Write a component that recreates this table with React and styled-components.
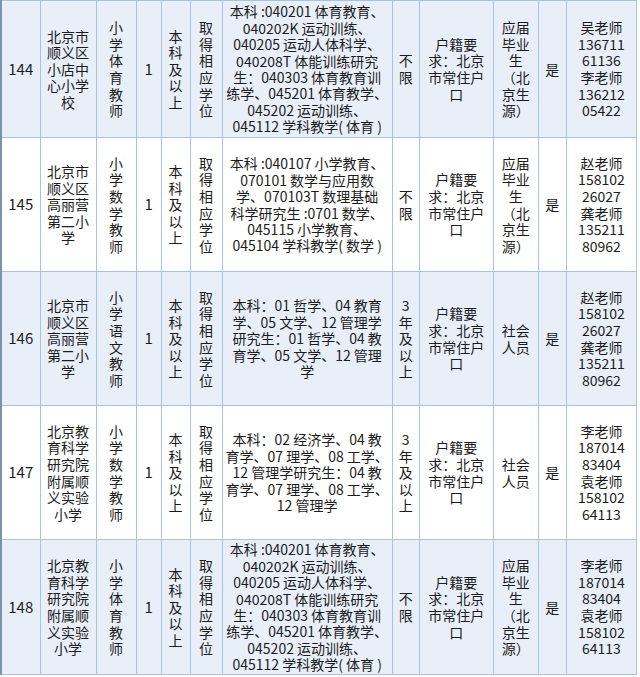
import React from "react";
import styled, { createGlobalStyle } from "styled-components";

const GlobalStyle = createGlobalStyle`
    html, body {
        margin: 0;
        padding: 0;
        background: #ffffff;
    }
`;

const COLUMN_WIDTHS = [39, 56, 40, 25, 29, 32, 170, 27, 74, 45, 28, 70];

const PE_MAJORS = [
    "本科 :040201 体育教育、",
    "040202K 运动训练、",
    "040205 运动人体科学、",
    "040208T 体能训练研究",
    "生：040303 体育教育训",
    "练学、045201 体育教学、",
    "045202 运动训练、",
    "045112 学科教学( 体育 )"
];

const ROWS = [
    {
        id: "144",
        school: ["北京市", "顺义区", "小店中", "心小学", "校"],
        post: "小学体育教师",
        count: "1",
        education: "本科及以上",
        degree: "取得相应学位",
        majors: PE_MAJORS,
        experience: "不限",
        hukou: ["户籍要", "求：北京", "市常住户", "口"],
        source: ["应届", "毕业", "生", "（北", "京生", "源）"],
        flag: "是",
        contact: ["吴老师", "136711", "61136", "李老师", "136212", "05422"]
    },
    {
        id: "145",
        school: ["北京市", "顺义区", "高丽营", "第二小", "学"],
        post: "小学数学教师",
        count: "1",
        education: "本科及以上",
        degree: "取得相应学位",
        majors: [
            "本科 :040107 小学教育、",
            "070101 数学与应用数",
            "学、070103T 数理基础",
            "科学研究生 :0701 数学、",
            "045115 小学教育、",
            "045104 学科教学( 数学 )"
        ],
        experience: "不限",
        hukou: ["户籍要", "求：北京", "市常住户", "口"],
        source: ["应届", "毕业", "生", "（北", "京生", "源）"],
        flag: "是",
        contact: ["赵老师", "158102", "26027", "龚老师", "135211", "80962"]
    },
    {
        id: "146",
        school: ["北京市", "顺义区", "高丽营", "第二小", "学"],
        post: "小学语文教师",
        count: "1",
        education: "本科及以上",
        degree: "取得相应学位",
        majors: [
            "本科：01 哲学、04 教育",
            "学、05 文学、12 管理学",
            "研究生：01 哲学、04 教",
            "育学、05 文学、12 管理",
            "学"
        ],
        experience: "3年及以上",
        hukou: ["户籍要", "求：北京", "市常住户", "口"],
        source: ["社会", "人员"],
        flag: "是",
        contact: ["赵老师", "158102", "26027", "龚老师", "135211", "80962"]
    },
    {
        id: "147",
        school: ["北京教", "育科学", "研究院", "附属顺", "义实验", "小学"],
        post: "小学数学教师",
        count: "1",
        education: "本科及以上",
        degree: "取得相应学位",
        majors: [
            "本科：02 经济学、04 教",
            "育学、07 理学、08 工学、",
            "12 管理学研究生：04 教",
            "育学、07 理学、08 工学、",
            "12 管理学"
        ],
        experience: "3年及以上",
        hukou: ["户籍要", "求：北京", "市常住户", "口"],
        source: ["社会", "人员"],
        flag: "是",
        contact: ["李老师", "187014", "83404", "袁老师", "158102", "64113"]
    },
    {
        id: "148",
        school: ["北京教", "育科学", "研究院", "附属顺", "义实验", "小学"],
        post: "小学体育教师",
        count: "1",
        education: "本科及以上",
        degree: "取得相应学位",
        majors: PE_MAJORS,
        experience: "不限",
        hukou: ["户籍要", "求：北京", "市常住户", "口"],
        source: ["应届", "毕业", "生", "（北", "京生", "源）"],
        flag: "是",
        contact: ["李老师", "187014", "83404", "袁老师", "158102", "64113"]
    }
];

const Page = styled.div`
    width: 640px;
    height: 677px;
    overflow: hidden;
    background: #ffffff;
    font-family: "Noto Sans CJK SC", "Noto Sans", sans-serif;
    color: #1c1c1c;
`;

const Table = styled.table`
    border-collapse: collapse;
    table-layout: fixed;
    width: 637px;
    border-left: 2px solid #7894b0;
`;

const Row = styled.tr`
    height: ${props => props.$height}px;
    background-color: ${props => (props.$shaded ? "#e8eff8" : "#ffffff")};
`;

const Cell = styled.td`
    border: 1px solid #a8c3dc;
    padding: 0;
    text-align: center;
    vertical-align: middle;
    font-size: ${props => (props.$big ? 15 : 14)}px;
    line-height: ${props => (props.$tight ? 16.4 : 16.6)}px;
    white-space: nowrap;
    overflow: hidden;
`;

const Line = styled.div`
    display: block;
`;

function Lines({ items }) {
    return items.map((text, index) => <Line key={index}>{text}</Line>);
}

function stack(text) {
    return Array.from(text);
}

export default function App() {
    return (
        <Page>
            <GlobalStyle />
            <Table>
                <colgroup>
                    {COLUMN_WIDTHS.map((width, index) => (
                        <col key={index} style={{ width }} />
                    ))}
                </colgroup>
                <tbody>
                    {ROWS.map((row, index) => (
                        <Row key={row.id} $shaded={index % 2 === 0} $height={index === 0 ? 137 : index === 4 ? 135 : 134}>
                            <Cell $big>{row.id}</Cell>
                            <Cell>
                                <Lines items={row.school} />
                            </Cell>
                            <Cell>
                                <Lines items={stack(row.post)} />
                            </Cell>
                            <Cell $big>{row.count}</Cell>
                            <Cell>
                                <Lines items={stack(row.education)} />
                            </Cell>
                            <Cell>
                                <Lines items={stack(row.degree)} />
                            </Cell>
                            <Cell $tight>
                                <Lines items={row.majors} />
                            </Cell>
                            <Cell>
                                <Lines items={row.experience === "不限" ? ["不", "限"] : ["3", "年", "及", "以", "上"]} />
                            </Cell>
                            <Cell>
                                <Lines items={row.hukou} />
                            </Cell>
                            <Cell>
                                <Lines items={row.source} />
                            </Cell>
                            <Cell>{row.flag}</Cell>
                            <Cell>
                                <Lines items={row.contact} />
                            </Cell>
                        </Row>
                    ))}
                </tbody>
            </Table>
        </Page>
    );
}
